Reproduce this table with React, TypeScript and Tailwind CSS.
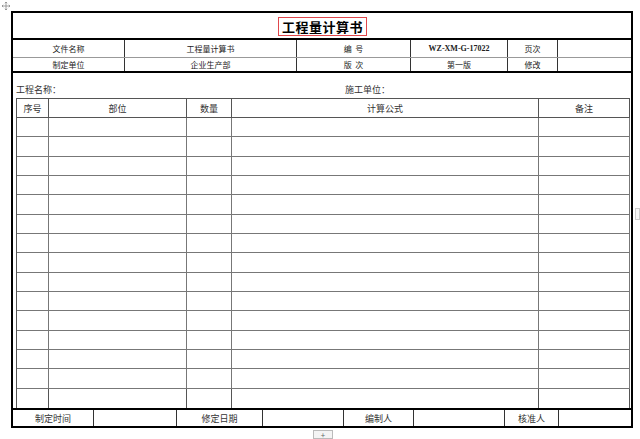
import React from "react";

const font = { fontFamily: '"Noto Sans CJK SC", "Noto Sans", sans-serif' };

const infoRows = [
  ["文件名称", "工程量计算书", "编  号", "WZ-XM-G-17022", "页次", ""],
  ["制定单位", "企业生产部", "版  次", "第一版", "修改", ""],
];

const footer = ["制定时间", "", "修定日期", "", "编制人", "", "核准人", ""];

export default function App() {
  const bodyRows = Array.from({ length: 15 });

  return (
    <div
      className="relative w-[640px] h-[439px] bg-white text-[#222] overflow-hidden"
      style={font}
    >
      {/* word table move handle */}
      <svg
        className="absolute left-[1px] top-[1px]"
        width="10"
        height="10"
        viewBox="0 0 10 10"
        fill="none"
        stroke="#888"
        strokeWidth="0.8"
      >
        <path d="M5 1v8M1 5h8M5 1l-1.2 1.2M5 1l1.2 1.2M5 9l-1.2-1.2M5 9l1.2-1.2M1 5l1.2-1.2M1 5l1.2 1.2M9 5l-1.2-1.2M9 5l-1.2 1.2" />
      </svg>

      <div className="pt-[11px] pl-[11px]">
        <div className="w-[622px] h-[417px] border-2 border-black flex flex-col">
          {/* title */}
          <div className="h-[27px] border-b-2 border-black flex items-center justify-center shrink-0">
            <div className="mt-[1px] ml-[1px] h-[19px] px-[3px] border border-[#e0474c] flex items-center text-[13px] font-bold tracking-[0.5px] leading-none text-black">
              工程量计算书
            </div>
          </div>

          {/* info rows */}
          {infoRows.map((row, i) => (
            <div
              key={i}
              className={
                i === 0
                  ? "h-[18px] grid grid-cols-[112px_172px_114px_97px_50px_1fr] border-b border-[#999] shrink-0"
                  : "h-[15px] grid grid-cols-[112px_172px_114px_97px_50px_1fr] border-b-2 border-black shrink-0"
              }
            >
              {row.map((c, j) => (
                <div
                  key={j}
                  className={
                    "flex items-center justify-center text-[8px] leading-none whitespace-pre " +
                    (j < 5 ? "border-r border-[#333]" : "") +
                    (i === 0 && j === 3 ? " font-['Liberation_Serif'] font-bold" : "")
                  }
                >
                  {c}
                </div>
              ))}
            </div>
          ))}

          {/* middle */}
          <div className="flex-1 flex flex-col pl-[3px] pr-[1px] min-h-0">
            <div className="h-[25px] flex items-end pb-[4px] text-[9px] leading-none shrink-0 text-[#333]">
              <div className="w-[329px]">工程名称：</div>
              <div>施工单位：</div>
            </div>
            <div className="flex-1 grid grid-cols-[32px_138px_45px_307px_1fr] grid-rows-[19px_repeat(15,1fr)] border-l border-t border-[#555]">
              {["序号", "部位", "数量", "计算公式", "备注"].map((h) => (
                <div
                  key={h}
                  className="border-r border-b border-[#555] flex items-center justify-center text-[9px] leading-none text-[#333]"
                >
                  {h}
                </div>
              ))}
              {bodyRows.map((_, r) =>
                [0, 1, 2, 3, 4].map((c) => (
                  <div
                    key={r + "-" + c}
                    className={
                      "border-r border-[#555] " +
                      (r < 14 ? "border-b border-[#777]" : "")
                    }
                  />
                ))
              )}
            </div>
          </div>

          {/* footer */}
          <div className="h-[18px] border-t-2 border-black grid grid-cols-[81px_83px_86px_81px_70px_91px_54px_1fr] shrink-0">
            {footer.map((c, i) => (
              <div
                key={i}
                className={
                  "flex items-center justify-center text-[9px] leading-none text-[#333] " +
                  (i < 7 ? "border-r border-[#333]" : "")
                }
              >
                {c}
              </div>
            ))}
          </div>
        </div>
      </div>

      {/* word insert-row marker */}
      <div className="absolute left-[313px] top-[430px] w-[20px] h-[9px] border border-[#bbb] bg-[#f4f4f4] flex items-center justify-center text-[8px] leading-none text-[#666]">
        +
      </div>
      <div className="absolute left-[635px] top-[208px] w-[5px] h-[12px] border border-[#ccc] bg-[#f7f7f7]" />
    </div>
  );
}
